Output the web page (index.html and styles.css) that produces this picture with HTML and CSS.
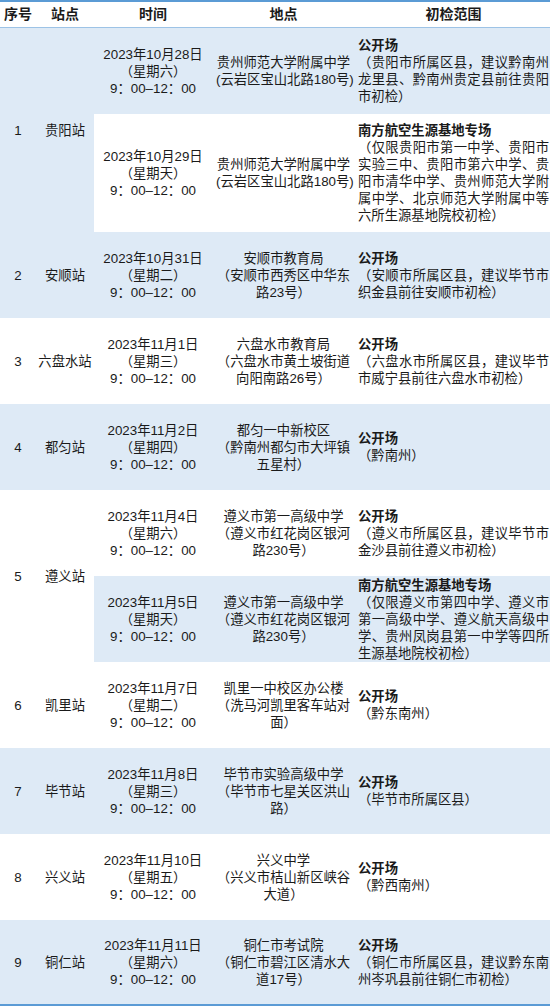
FILE: index.html
```html
<!DOCTYPE html>
<html lang="zh-CN">
<head>
<meta charset="utf-8">
<title>初检安排</title>
<link rel="stylesheet" href="styles.css">
</head>
<body>
<table class="schedule">
  <colgroup>
    <col class="c-num">
    <col class="c-station">
    <col class="c-time">
    <col class="c-place">
    <col class="c-scope">
  </colgroup>
  <thead>
    <tr class="head">
      <th>序号</th>
      <th>站点</th>
      <th class="time">时间</th>
      <th class="place">地点</th>
      <th class="scope-h">初检范围</th>
    </tr>
  </thead>
  <tbody>
    <tr class="band">
      <td class="num" rowspan="2">1</td>
      <td class="station" rowspan="2">贵阳站</td>
      <td class="time">2023年10月28日<br>（星期六）<br>9：00–12：00</td>
      <td class="place"><div class="nowrap">贵州师范大学附属中学</div><div class="nowrap">(云岩区宝山北路180号)</div></td>
      <td class="scope"><div class="kind">公开场</div><div class="detail">（贵阳市所属区县，建议黔南州龙里县、黔南州贵定县前往贵阳市初检）</div></td>
    </tr>
    <tr class="tall">
      <td class="time">2023年10月29日<br>（星期天）<br>9：00–12：00</td>
      <td class="place"><div class="nowrap">贵州师范大学附属中学</div><div class="nowrap">(云岩区宝山北路180号)</div></td>
      <td class="scope"><div class="kind">南方航空生源基地专场</div><div class="detail">（仅限贵阳市第一中学、贵阳市实验三中、贵阳市第六中学、贵阳市清华中学、贵州师范大学附属中学、北京师范大学附属中等六所生源基地院校初检）</div></td>
    </tr>
    <tr class="band">
      <td class="num">2</td>
      <td class="station">安顺站</td>
      <td class="time">2023年10月31日<br>（星期二）<br>9：00–12：00</td>
      <td class="place">安顺市教育局<br>（安顺市西秀区中华东路23号）</td>
      <td class="scope"><div class="kind">公开场</div><div class="detail">（安顺市所属区县，建议毕节市织金县前往安顺市初检）</div></td>
    </tr>
    <tr>
      <td class="num">3</td>
      <td class="station">六盘水站</td>
      <td class="time">2023年11月1日<br>（星期三）<br>9：00–12：00</td>
      <td class="place">六盘水市教育局<br>（六盘水市黄土坡街道向阳南路26号）</td>
      <td class="scope"><div class="kind">公开场</div><div class="detail">（六盘水市所属区县，建议毕节市威宁县前往六盘水市初检）</div></td>
    </tr>
    <tr class="band">
      <td class="num">4</td>
      <td class="station">都匀站</td>
      <td class="time">2023年11月2日<br>（星期四）<br>9：00–12：00</td>
      <td class="place">都匀一中新校区<br>（黔南州都匀市大坪镇五星村）</td>
      <td class="scope"><div class="kind">公开场</div><div class="detail">（黔南州）</div></td>
    </tr>
    <tr>
      <td class="num" rowspan="2">5</td>
      <td class="station" rowspan="2">遵义站</td>
      <td class="time">2023年11月4日<br>（星期六）<br>9：00–12：00</td>
      <td class="place">遵义市第一高级中学<br>（遵义市红花岗区银河路230号）</td>
      <td class="scope"><div class="kind">公开场</div><div class="detail">（遵义市所属区县，建议毕节市金沙县前往遵义市初检）</div></td>
    </tr>
    <tr class="band">
      <td class="time">2023年11月5日<br>（星期天）<br>9：00–12：00</td>
      <td class="place">遵义市第一高级中学<br>（遵义市红花岗区银河路230号）</td>
      <td class="scope"><div class="kind">南方航空生源基地专场</div><div class="detail">（仅限遵义市第四中学、遵义市第一高级中学、遵义航天高级中学、贵州凤岗县第一中学等四所生源基地院校初检）</div></td>
    </tr>
    <tr>
      <td class="num">6</td>
      <td class="station">凯里站</td>
      <td class="time">2023年11月7日<br>（星期二）<br>9：00–12：00</td>
      <td class="place">凯里一中校区办公楼<br>（洗马河凯里客车站对面）</td>
      <td class="scope"><div class="kind">公开场</div><div class="detail">（黔东南州）</div></td>
    </tr>
    <tr class="band">
      <td class="num">7</td>
      <td class="station">毕节站</td>
      <td class="time">2023年11月8日<br>（星期三）<br>9：00–12：00</td>
      <td class="place">毕节市实验高级中学<br>（毕节市七星关区洪山路）</td>
      <td class="scope"><div class="kind">公开场</div><div class="detail">（毕节市所属区县）</div></td>
    </tr>
    <tr>
      <td class="num">8</td>
      <td class="station">兴义站</td>
      <td class="time">2023年11月10日<br>（星期五）<br>9：00–12：00</td>
      <td class="place">兴义中学<br>（兴义市桔山新区峡谷大道）</td>
      <td class="scope"><div class="kind">公开场</div><div class="detail">（黔西南州）</div></td>
    </tr>
    <tr class="band last">
      <td class="num">9</td>
      <td class="station">铜仁站</td>
      <td class="time">2023年11月11日<br>（星期六）<br>9：00–12：00</td>
      <td class="place">铜仁市考试院<br>（铜仁市碧江区清水大道17号）</td>
      <td class="scope"><div class="kind">公开场</div><div class="detail">（铜仁市所属区县，建议黔东南州岑巩县前往铜仁市初检）</div></td>
    </tr>
  </tbody>
</table>
</body>
</html>
```

FILE: styles.css
```css
html, body {
  margin: 0;
  padding: 0;
  background: #ffffff;
}

.schedule {
  width: 550px;
  table-layout: fixed;
  border-collapse: separate;
  border-spacing: 0;
  font-family: "Liberation Sans", "Noto Sans CJK SC", sans-serif;
  font-size: 13.33px;
  line-height: 17px;
  color: #1a1a1a;
  text-spacing-trim: space-all;
}

.c-num { width: 36px; }
.c-station { width: 58px; }
.c-time { width: 122px; }
.c-place { width: 135px; }
.c-scope { width: 199px; }

.head { height: 28px; }

.head th {
  box-sizing: border-box;
  height: 28px;
  padding: 0;
  border-top: 2px solid #5b9bd5;
  border-bottom: 1px solid #9dc3e6;
  font-size: 14px;
  font-weight: 700;
  text-align: center;
  vertical-align: middle;
  background: #ffffff;
}

.head .time { padding-right: 4px; }
.head .scope-h { padding: 0 1px 0 7px; }

tbody tr { height: 86px; }
tbody tr.tall { height: 118px; }

td {
  padding: 0;
  text-align: center;
  vertical-align: middle;
  background: #ffffff;
}

.band td { background: #deeaf6; }

.last td { border-bottom: 2px solid #5b9bd5; }

.time { padding-right: 4px; }

.nowrap { white-space: nowrap; }

.scope {
  text-align: justify;
  padding: 0 1px 0 7px;
}

.kind {
  font-weight: 700;
  text-align: left;
}

.detail {
  text-align: justify;
}
```
